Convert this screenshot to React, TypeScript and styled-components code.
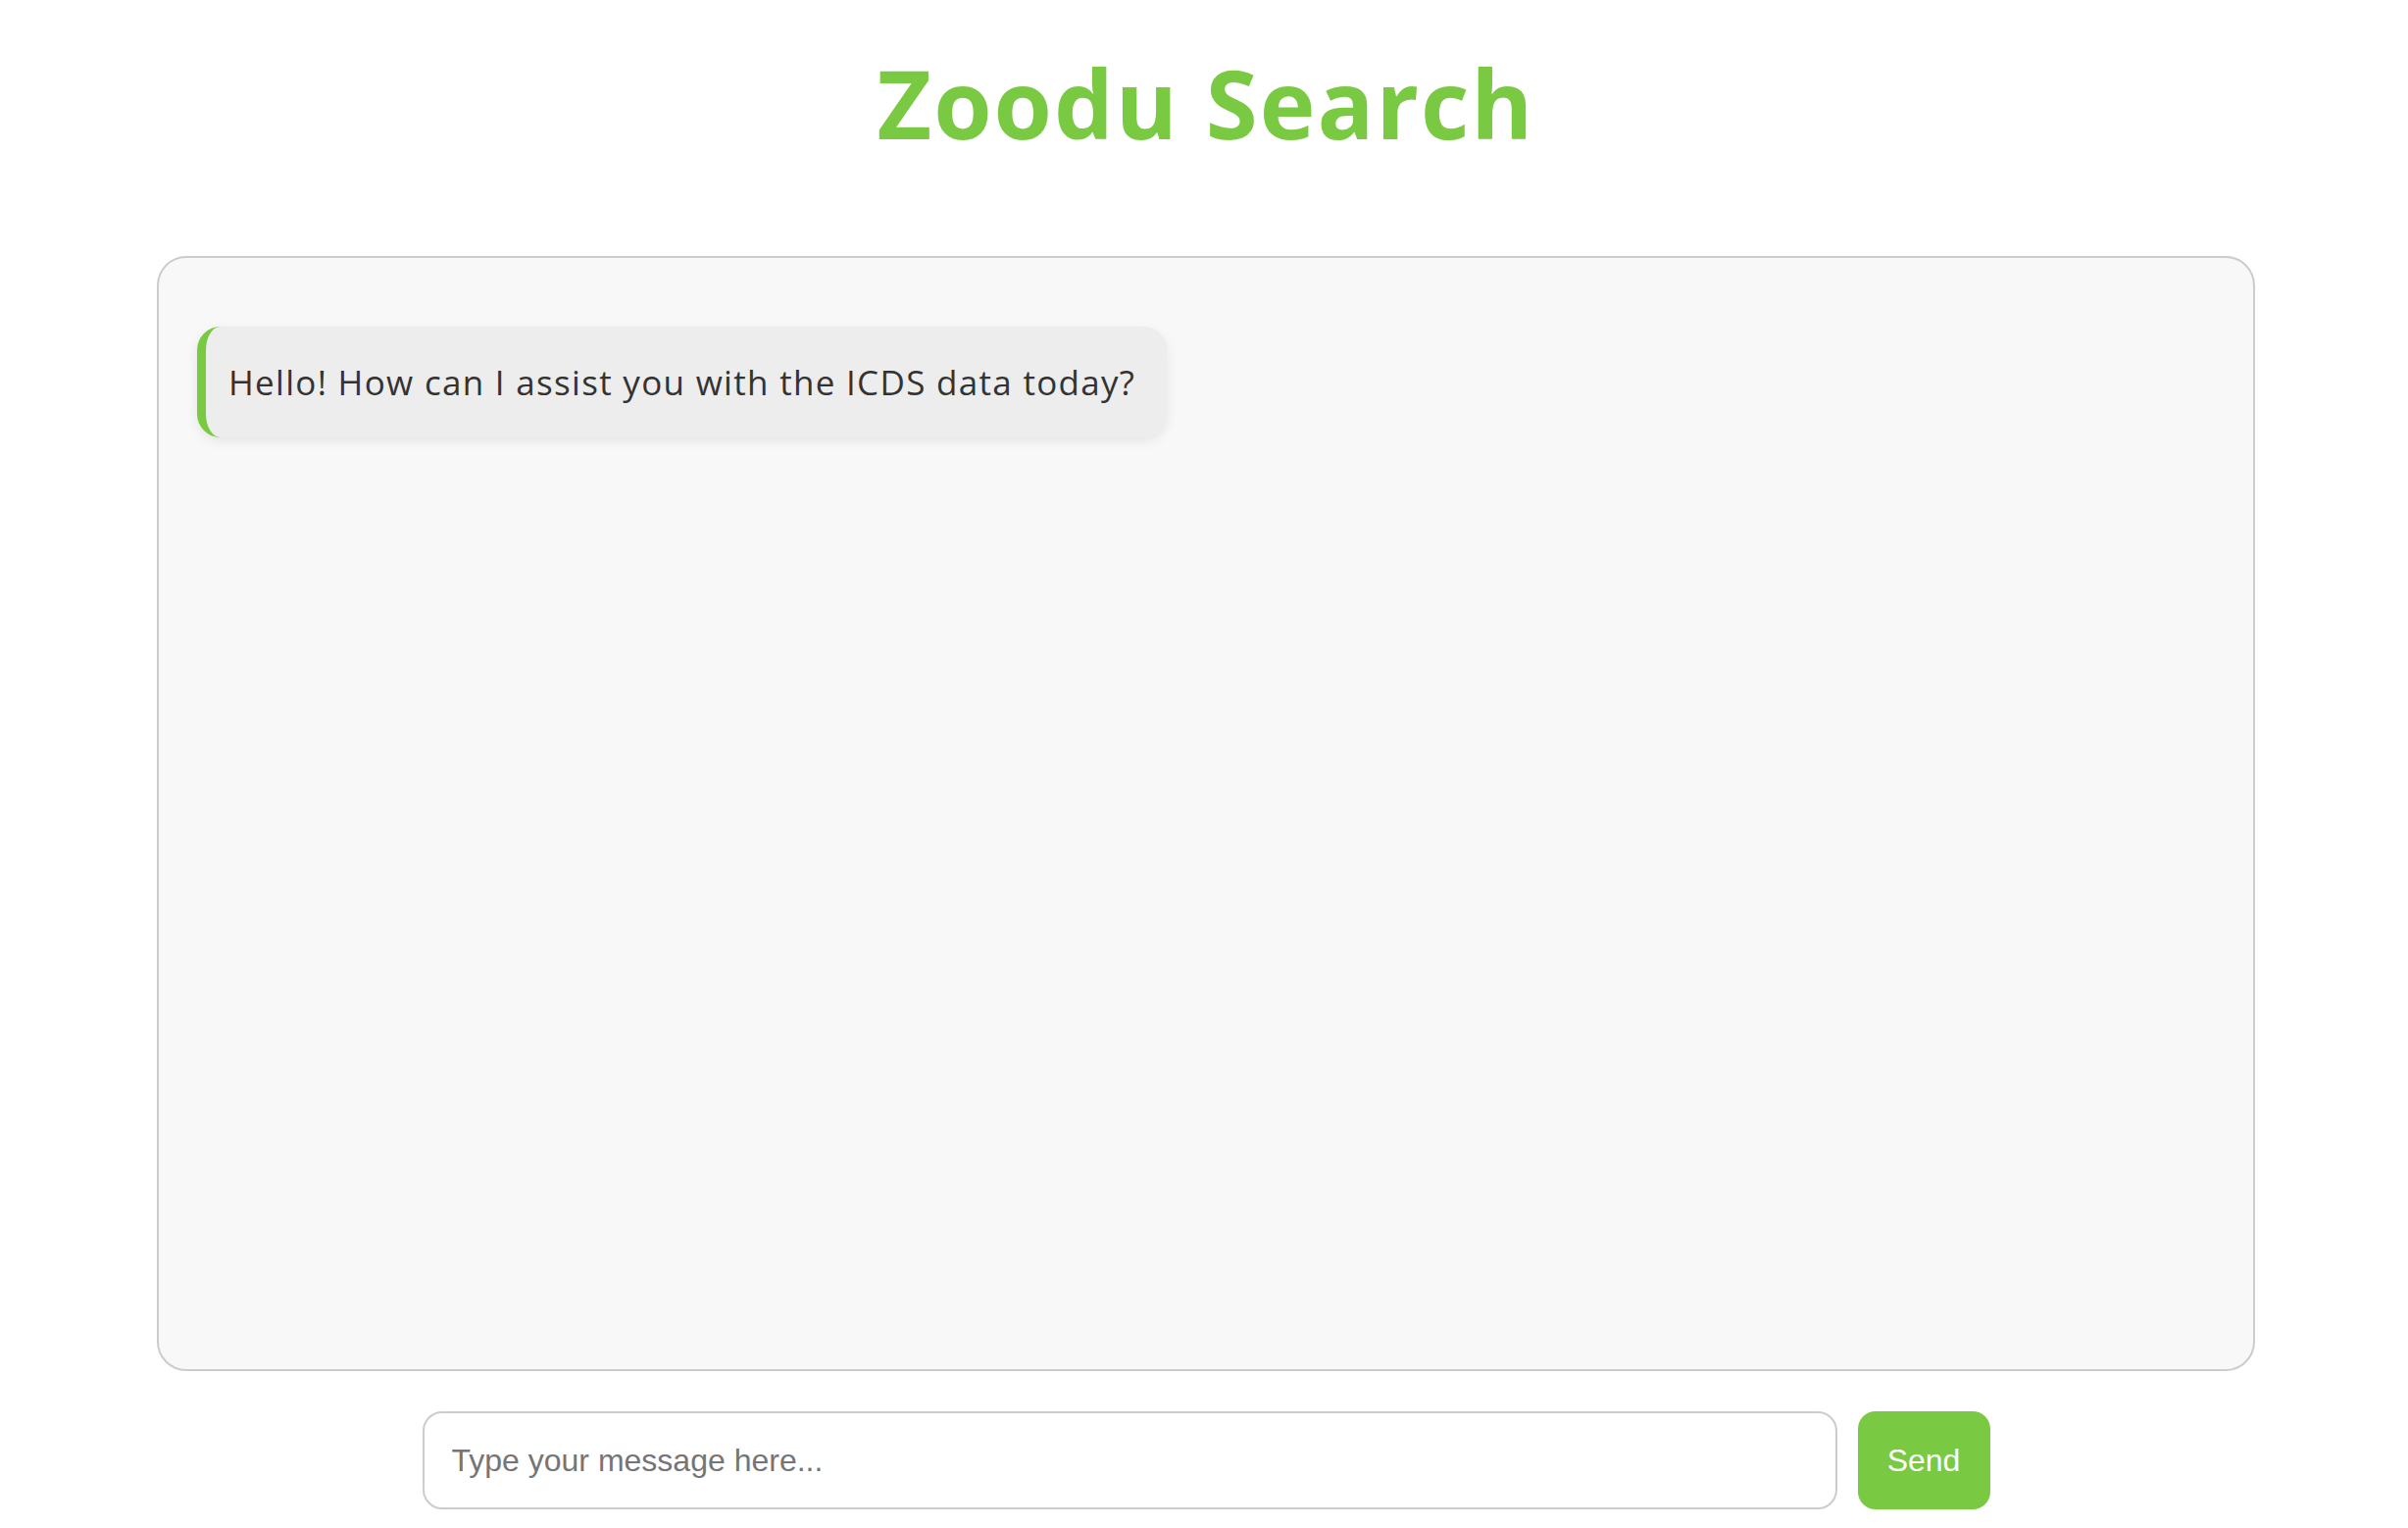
import styled, { createGlobalStyle } from "styled-components";

const GlobalStyle = createGlobalStyle`
  html, body {
    margin: 0;
    padding: 0;
    background: #ffffff;
  }
  * {
    box-sizing: border-box;
  }
`;

const Page = styled.div`
  width: 2456px;
  height: 1558px;
  padding: 57px 156px 0 160px;
  display: flex;
  flex-direction: column;
  align-items: stretch;
`;

const Title = styled.h1`
  margin: 0 0 108px;
  text-align: center;
  font-family: "Open Sans", "Noto Sans", sans-serif;
  font-weight: 700;
  font-size: 96px;
  line-height: 96px;
  color: #7ac943;
  letter-spacing: 2px;
`;

const ChatBox = styled.div`
  height: 1137px;
  border: 2px solid #cccccc;
  border-radius: 30px;
  background: #f8f8f8;
  padding: 70px 40px 40px 39px;
  display: flex;
  flex-direction: column;
  align-items: flex-start;
  gap: 20px;
`;

const Bubble = styled.div`
  background: #ededed;
  color: #333333;
  border-left: 9px solid #7ac943;
  border-radius: 24px;
  padding: 32px 32px 32px 23px;
  font-family: "Open Sans", "Noto Sans", sans-serif;
  font-size: 35px;
  line-height: 49px;
  letter-spacing: 1.3px;
  box-shadow: 0 4px 12px rgba(0, 0, 0, 0.08);
`;

const InputRow = styled.div`
  margin-top: 41px;
  display: flex;
  justify-content: center;
  gap: 21px;
`;

const MessageInput = styled.input`
  width: 1443px;
  height: 100px;
  border: 2px solid #cccccc;
  border-radius: 20px;
  padding: 0 28px;
  font-family: "Liberation Sans", Arial, sans-serif;
  font-size: 32px;
  color: #333333;
  background: #ffffff;
  outline: none;

  &::placeholder {
    color: #757575;
  }
`;

const SendButton = styled.button`
  width: 135px;
  height: 100px;
  border: none;
  border-radius: 18px;
  background: #7ac943;
  color: #ffffff;
  font-family: "Liberation Sans", Arial, sans-serif;
  font-size: 32px;
  cursor: pointer;
`;

export default function App() {
  return (
    <>
      <GlobalStyle />
      <Page>
        <Title>Zoodu Search</Title>
        <ChatBox>
          <Bubble>Hello! How can I assist you with the ICDS data today?</Bubble>
        </ChatBox>
        <InputRow>
          <MessageInput placeholder="Type your message here..." />
          <SendButton>Send</SendButton>
        </InputRow>
      </Page>
    </>
  );
}
